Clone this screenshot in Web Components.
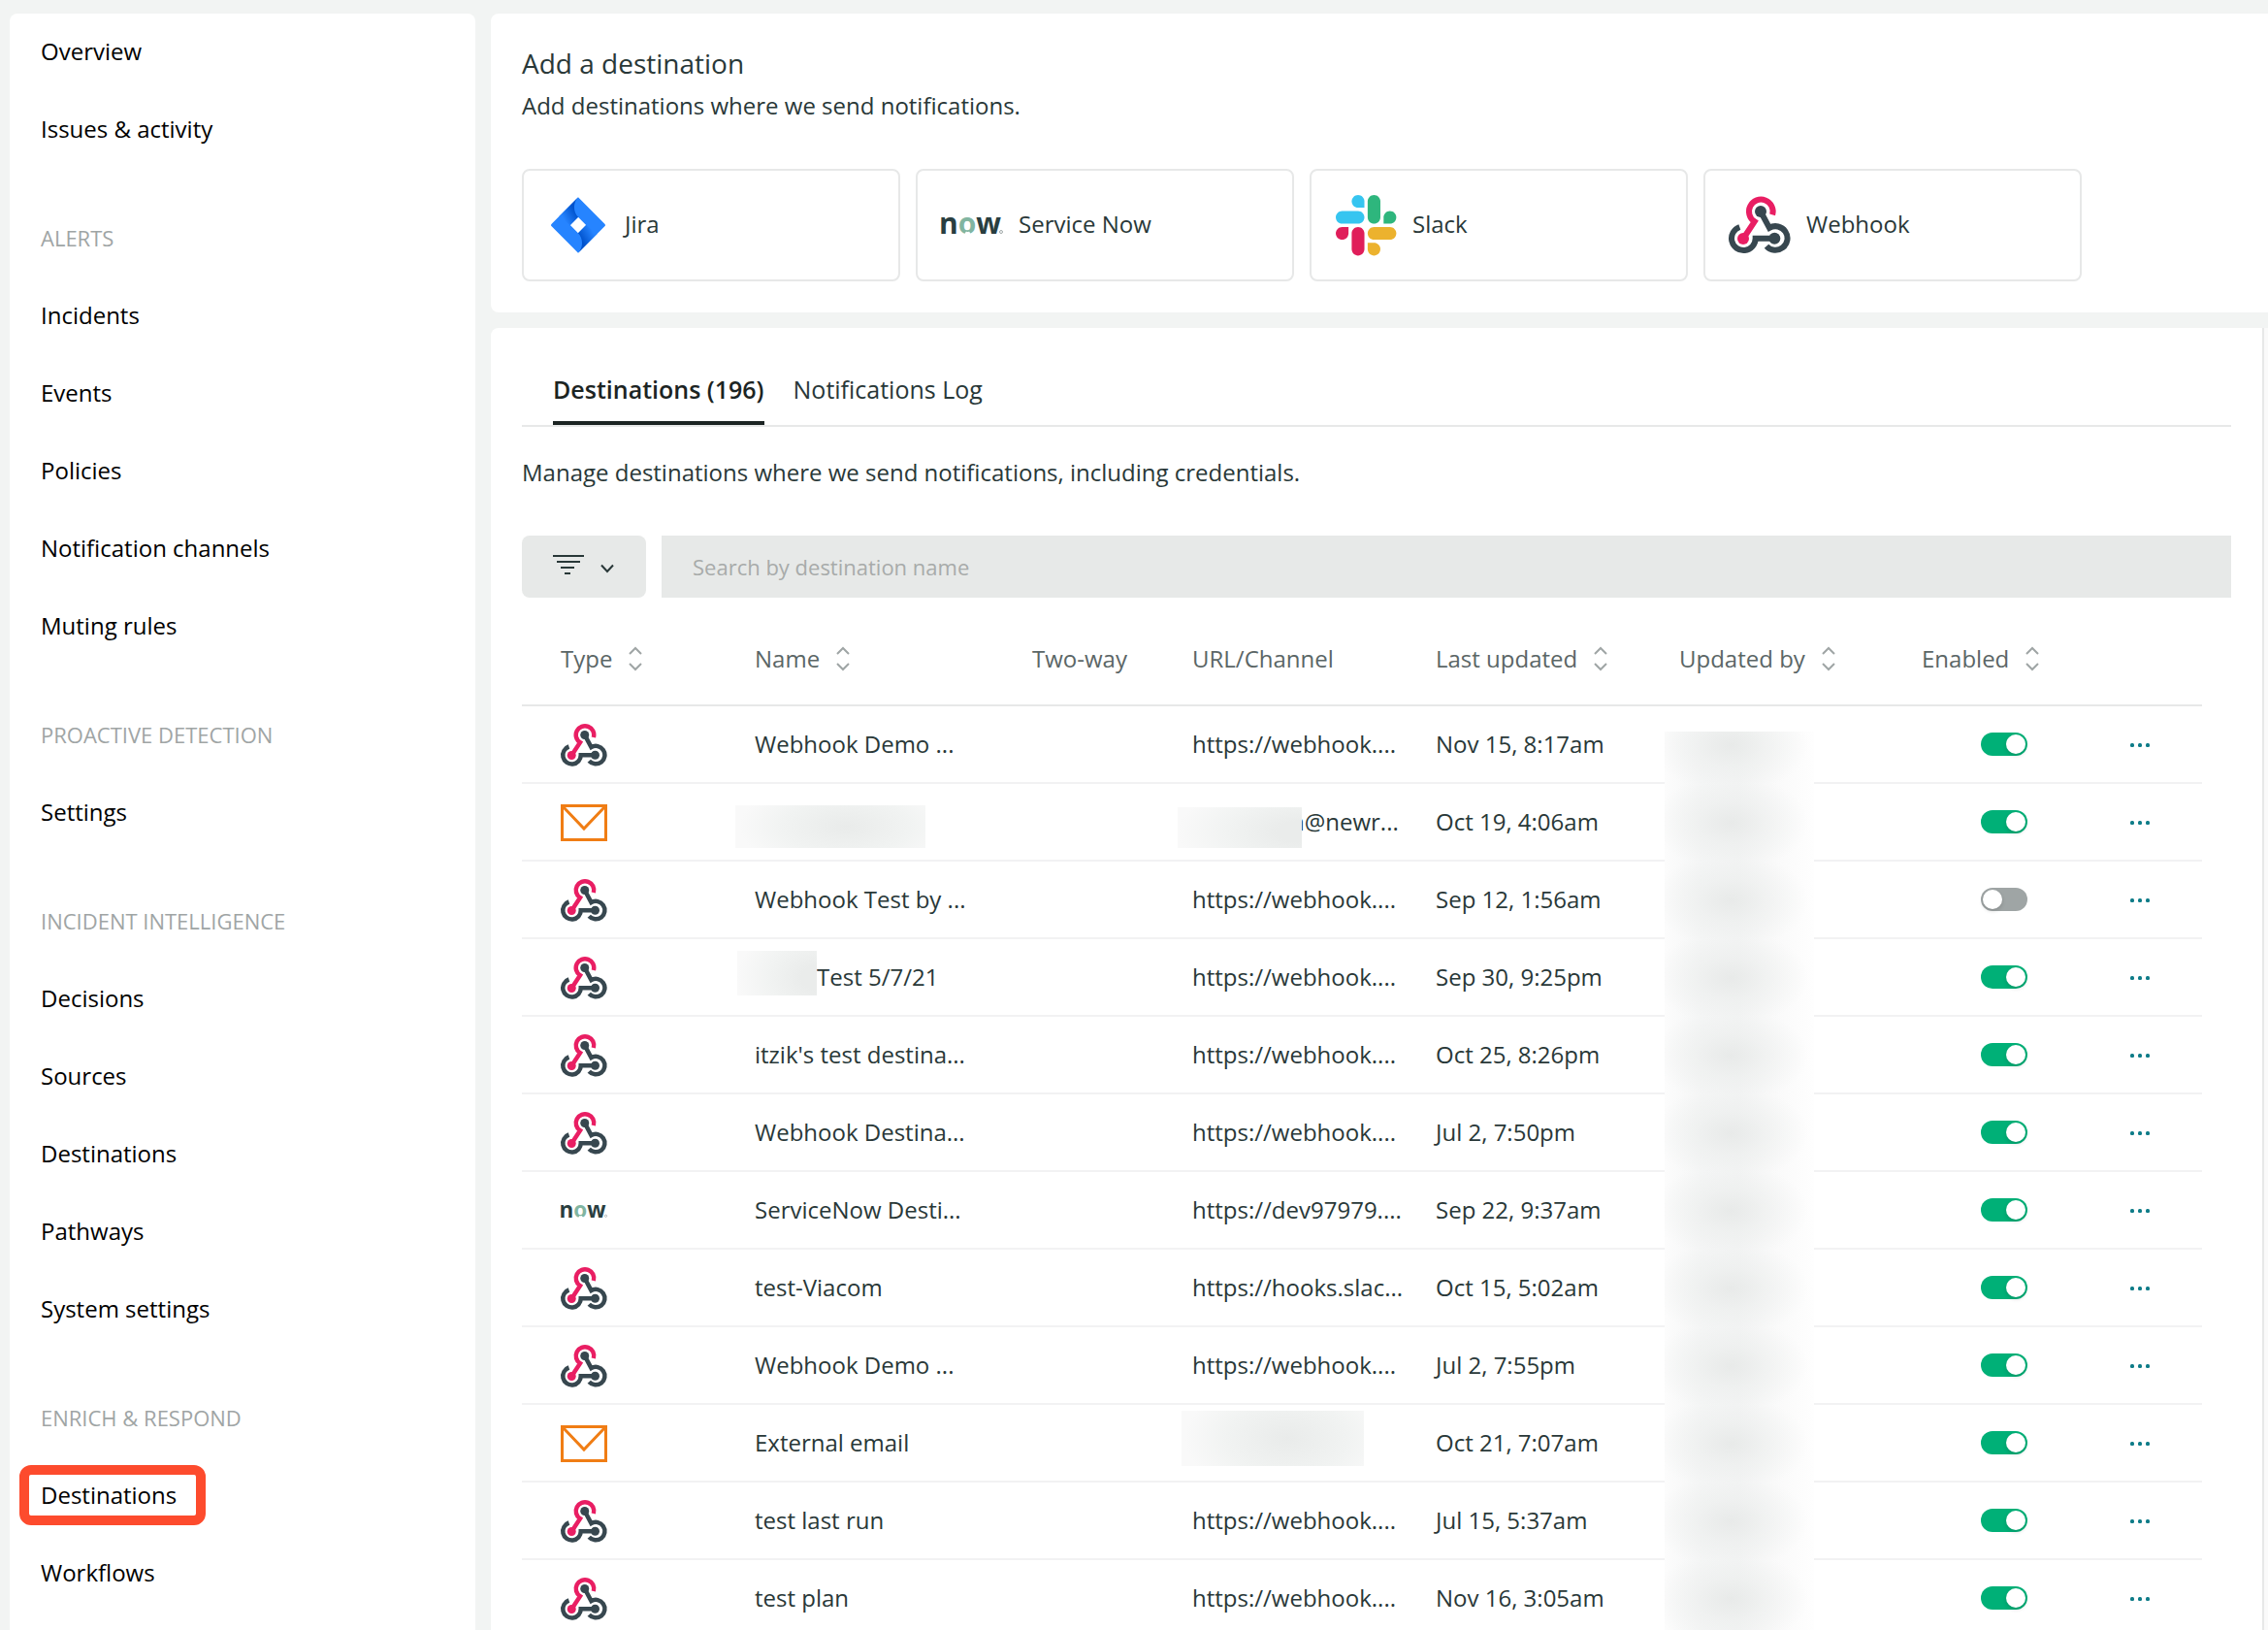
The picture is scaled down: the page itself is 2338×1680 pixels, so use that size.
<!DOCTYPE html>
<html lang="en">
<head>
<meta charset="utf-8">
<title>Destinations</title>
<style>
  html, body { margin: 0; height: 100%; }
  body {
    font-family: "Open Sans", "Noto Sans", sans-serif;
    font-size: 24px;
    line-height: 34px;
    color: #293838;
    background: #f2f4f3;
    --line: #e7e8e8;
    --line-soft: #f2f2f3;
    --field: #e7e9e8;
    --muted: #9fa5a5;
    overflow: hidden;
  }
</style>
</head>
<body>
<app-shell>
  <side-nav slot="nav">
    <nav-item>Overview</nav-item>
    <nav-item>Issues &amp; activity</nav-item>
    <nav-group heading="ALERTS">
      <nav-item>Incidents</nav-item>
      <nav-item>Events</nav-item>
      <nav-item>Policies</nav-item>
      <nav-item>Notification channels</nav-item>
      <nav-item>Muting rules</nav-item>
    </nav-group>
    <nav-group heading="PROACTIVE DETECTION">
      <nav-item>Settings</nav-item>
    </nav-group>
    <nav-group heading="INCIDENT INTELLIGENCE">
      <nav-item>Decisions</nav-item>
      <nav-item>Sources</nav-item>
      <nav-item>Destinations</nav-item>
      <nav-item>Pathways</nav-item>
      <nav-item>System settings</nav-item>
    </nav-group>
    <nav-group heading="ENRICH &amp; RESPOND">
      <nav-item marked>Destinations</nav-item>
      <nav-item>Workflows</nav-item>
    </nav-group>
  </side-nav>

  <add-destination>
    <destination-card icon="jira">Jira</destination-card>
    <destination-card icon="now">Service Now</destination-card>
    <destination-card icon="slack">Slack</destination-card>
    <destination-card icon="webhook">Webhook</destination-card>
  </add-destination>

  <destination-panel>
    <tab-bar slot="tabs">
      <tab-item selected>Destinations (196)</tab-item>
      <tab-item>Notifications Log</tab-item>
    </tab-bar>
    <search-bar></search-bar>
    <destination-table></destination-table>
  </destination-panel>
</app-shell>

<script>
const define = (name, html, setup) => {
  const template = document.createElement('template');
  template.innerHTML = html;
  customElements.define(name, class extends HTMLElement {
    constructor() {
      super();
      this.attachShadow({ mode: 'open' }).append(template.content.cloneNode(true));
    }
    connectedCallback() { if (setup) setup(this, this.shadowRoot); }
  });
};

const ICONS = {
  jira: `<svg viewBox="-12 -10 192 192">
    <defs>
      <linearGradient id="g1" gradientUnits="userSpaceOnUse" x1="76" y1="34" x2="34" y2="58"><stop offset=".1" stop-color="#0052cc"/><stop offset="1" stop-color="#2684ff"/></linearGradient>
      <linearGradient id="g2" gradientUnits="userSpaceOnUse" x1="92" y1="138" x2="134" y2="114"><stop offset=".1" stop-color="#0052cc"/><stop offset="1" stop-color="#2684ff"/></linearGradient>
    </defs>
    <path fill="#2684ff" fill-rule="evenodd" d="M84 0 166 82Q170 86 166 90L84 172 2 90Q-2 86 2 82ZM84 61.500 59.500 86 84 110.500 108.500 86Z"/>
    <path fill="url(#g1)" d="M84 0C68 16 68 45 84 61.500L59.500 86 25 59Z"/>
    <path fill="url(#g2)" d="M84 172C100 156 100 127 84 110.500L108.500 86 143 113Z"/>
  </svg>`,
  now: `<svg viewBox="0 0 64 64">
    <text x="-2" y="41" font-family="Open Sans, sans-serif" font-size="30" font-weight="700" fill="#293e40">n<tspan fill="#81b5a1">o</tspan>w</text>
    <path fill="#fff" d="M23 43 26 38.500Q27.500 39.500 29 38.500L32 43Z"/>
    <circle cx="62" cy="39" r="1.500" fill="none" stroke="#8b9596" stroke-width=".8"/>
  </svg>`,
  slack: `<svg viewBox="-2 -2 126 126">
    <g fill="#e01e5a"><path d="M25.800 77.600c0 7.100-5.800 12.900-12.900 12.900S0 84.700 0 77.600s5.800-12.900 12.900-12.900h12.900z"/><path d="M32.300 77.600c0-7.100 5.800-12.900 12.900-12.900s12.900 5.800 12.900 12.900v32.300c0 7.100-5.800 12.900-12.900 12.900s-12.900-5.800-12.900-12.900z"/></g>
    <g fill="#36c5f0"><path d="M45.200 25.800c-7.100 0-12.900-5.800-12.900-12.900S38.100 0 45.200 0s12.900 5.800 12.900 12.900v12.900z"/><path d="M45.200 32.300c7.100 0 12.900 5.800 12.900 12.900s-5.800 12.900-12.900 12.900H12.900C5.800 58.100 0 52.300 0 45.200s5.800-12.900 12.900-12.900z"/></g>
    <g fill="#2eb67d"><path d="M97 45.200c0-7.100 5.800-12.900 12.900-12.900s12.900 5.800 12.900 12.900-5.800 12.900-12.900 12.900H97z"/><path d="M90.500 45.200c0 7.100-5.800 12.900-12.900 12.900s-12.900-5.800-12.900-12.900V12.900C64.700 5.800 70.500 0 77.600 0s12.900 5.800 12.900 12.900z"/></g>
    <g fill="#ecb22e"><path d="M77.600 97c7.100 0 12.900 5.800 12.900 12.900s-5.800 12.900-12.900 12.900-12.900-5.800-12.900-12.900V97z"/><path d="M77.600 90.500c-7.100 0-12.900-5.800-12.900-12.900s5.800-12.900 12.900-12.900h32.300c7.100 0 12.900 5.800 12.900 12.900s-5.800 12.900-12.900 12.900z"/></g>
  </svg>`,
  webhook: `<svg viewBox="0 -9 192 192" fill="none" stroke-width="18">
    <g stroke="#37474f"><path d="M99 45 126 95.500A37 37 0 1 1 117 152"/><path d="M142 128H83A37 37 0 1 1 34 93"/></g>
    <path stroke="#e91e63" d="M135.500 55A37 37 0 1 0 80 76L45 129"/>
    <g stroke="none"><circle cx="99" cy="45" r="18" fill="#37474f"/><circle cx="142" cy="128" r="18" fill="#37474f"/><circle cx="45" cy="129" r="18" fill="#e91e63"/></g>
  </svg>`,
  email: `<svg viewBox="0 0 48 48" fill="none" stroke="#f07d14" stroke-width="3">
    <path d="M1.500 6.500H46.500V41.500H1.500Z"/><path d="M2.500 7.500 24 30 45.500 7.500"/>
  </svg>`
};

define('brand-icon', `<style>
  :host { display: block; flex: none; width: var(--icon-size, 48px); height: var(--icon-size, 48px); }
  svg { display: block; width: 100%; height: 100%; overflow: visible; }
</style><div aria-hidden="true"></div>`, (el, root) => {
  root.querySelector('div').innerHTML = ICONS[el.getAttribute('name')];
});

define('app-shell', `<style>
  :host { display: flex; gap: 16px; height: 100vh; box-sizing: border-box; padding: 14px 0 0 10px; overflow: hidden; }
  main { flex: 1; min-width: 0; display: flex; flex-direction: column; gap: 16px; }
</style><slot name="nav"></slot><main><slot></slot></main>`);

define('side-nav', `<style>
  :host { display: block; flex: none; width: 480px; box-sizing: border-box; background: #fff; border-radius: 8px 8px 0 0; padding: 23px 32px 0; }
  nav { display: flex; flex-direction: column; gap: 48px; }
</style><nav><slot></slot></nav>`);

define('nav-group', `<style>
  :host { display: flex; flex-direction: column; gap: 48px; margin-top: 32px; }
  h2 { margin: 0; font-size: 22px; line-height: 32px; font-weight: 400; color: var(--muted); }
</style><h2></h2><slot></slot>`, (el, root) => {
  root.querySelector('h2').textContent = el.getAttribute('heading');
});

define('nav-item', `<style>
  :host { display: block; line-height: 32px; }
  a { display: inline-block; position: relative; color: #000; text-decoration: none; vertical-align: top; }
  :host([marked]) a::after { content: ""; position: absolute; inset: -15px -30px -15px -22px; border: 10px solid #fd4b2d; border-radius: 12px; }
</style><a href="#"><slot></slot></a>`);

define('add-destination', `<style>
  :host { display: block; flex: none; background: #fff; border-radius: 8px 0 0 8px; padding: 32px; }
  h1 { margin: 0 0 8px; font-size: 28px; line-height: 38px; font-weight: 400; }
  p { margin: 0 0 48px; }
  .cards { display: flex; flex-wrap: wrap; gap: 16px; }
</style><h1>Add a destination</h1><p>Add destinations where we send notifications.</p><div class="cards"><slot></slot></div>`);

define('destination-card', `<style>
  :host { display: block; flex: 0 0 390px; }
  button { display: flex; align-items: center; gap: 16px; box-sizing: border-box; width: 100%; height: 116px; padding: 0 24px; border: 2px solid var(--line); border-radius: 8px; background: #fff; font: inherit; color: inherit; text-align: left; }
  span { padding-bottom: 2px; }
  brand-icon { --icon-size: 64px; }
</style><button type="button"><brand-icon></brand-icon><span><slot></slot></span></button>`, (el, root) => {
  const icon = document.createElement('brand-icon');
  icon.setAttribute('name', el.getAttribute('icon'));
  root.querySelector('brand-icon').replaceWith(icon);
});

define('destination-panel', `<style>
  :host { display: flex; flex: 1; min-height: 0; background: #fff; border-radius: 8px 0 0 0; overflow: hidden; }
  section { flex: 1; min-width: 0; padding: 32px 32px 0; }
  p { margin: 30px 0 48px; }
  .track { flex: none; width: 4px; border-left: 2px solid var(--line); background: #fafafa; }
</style><section><slot name="tabs"></slot><p>Manage destinations where we send notifications, including credentials.</p><slot></slot></section><div class="track"></div>`);

define('tab-bar', `<style>
  :host { display: flex; gap: 30px; padding: 0 32px; border-bottom: 2px solid var(--line); font-size: 25px; }
</style><slot></slot>`);

define('tab-item', `<style>
  :host { display: block; }
  button { display: block; margin: 0; padding: 14px 0 16px; border: 0; border-bottom: 4px solid transparent; background: none; font: inherit; color: inherit; }
  :host([selected]) button { font-weight: 600; color: #1c2423; border-color: #1c2423; }
</style><button type="button"><slot></slot></button>`);

define('search-bar', `<style>
  :host { display: flex; gap: 16px; margin-bottom: 16px; }
  button { display: flex; align-items: center; justify-content: center; flex: none; width: 128px; height: 64px; padding: 0; border: 0; border-radius: 8px; background: var(--field); }
  input { flex: 1; min-width: 0; box-sizing: border-box; height: 64px; padding: 0 32px; border: 0; border-radius: 0; background: var(--field); font: inherit; font-size: 22px; color: inherit; }
  input::placeholder { color: #a8abaa; opacity: 1; }
  svg { display: block; }
</style>
<button type="button" aria-label="Filter"><svg width="64" height="32" viewBox="0 0 64 32" fill="none" stroke="#293838" stroke-width="2"><path d="M0 5H32M4 11H28M8 17H22M12 23H18"/><path d="M50 14.500 56 21 62 14.500"/></svg></button>
<input type="text" aria-label="Search by destination name" placeholder="Search by destination name">`);

define('sort-button', `<style>
  :host { display: inline-block; }
  button { display: flex; align-items: center; gap: 16px; padding: 0; border: 0; background: none; font: inherit; color: inherit; white-space: nowrap; }
  svg { flex: none; }
</style><button type="button"><slot></slot><svg width="16" height="26" viewBox="0 0 16 26" fill="none" stroke="#9fa5a5" stroke-width="2"><path d="M2 8 8 2 14 8M2 18 8 24 14 18"/></svg></button>`);

define('toggle-switch', `<style>
  :host { display: block; }
  input { appearance: none; display: block; width: 48px; height: 24px; margin: 0; padding: 2px; box-sizing: border-box; border-radius: 12px; background: #9fa5a5; }
  input::before { content: ""; display: block; width: 20px; height: 20px; border-radius: 10px; background: #fff; box-shadow: 0 2px 4px rgba(0, 0, 0, .15); }
  input:checked { background: #00b077; }
  input:checked::before { margin-left: auto; }
</style><input type="checkbox" role="switch" aria-label="Enabled">`, (el, root) => {
  root.querySelector('input').checked = el.hasAttribute('on');
});

define('row-menu', `<style>
  :host { display: block; }
  button { display: block; padding: 8px 16px; border: 0; background: none; }
  svg { display: block; }
</style><button type="button" aria-label="More actions"><svg width="20" height="4" viewBox="0 0 20 4" fill="#0e7c88"><rect width="4" height="4" rx="1.500"/><rect x="8" width="4" height="4" rx="1.500"/><rect x="16" width="4" height="4" rx="1.500"/></svg></button>`);

/* A patch laid over private data in a cell. */
define('privacy-patch', `<style>
  :host { position: absolute; background: radial-gradient(ellipse 56% 110% at 58% 50%, #e9ebea 0%, #f1f3f2 60%, #f9f9f9 100%); }
  :host([cut]) { background: radial-gradient(ellipse 100% 130% at 100% 60%, #eaeceb 20%, #f1f3f2 60%, #f9f9f9 100%); }
</style>`);

const patch = (x, y, w, h, cut) => `<privacy-patch ${cut ? 'cut' : ''} style="left:${x}px;top:${y}px;width:${w}px;height:${h}px"></privacy-patch>`;
const HOOK = 'https://webhook....';
const ROWS = [
  ['webhook', 'Webhook Demo ...', HOOK, 'Nov 15, 8:17am', 1],
  ['email', patch(-20, 22, 196, 44), `<span class="mail">n@newr...</span>` + patch(-15, 24, 128, 42, 1), 'Oct 19, 4:06am', 1],
  ['webhook', 'Webhook Test by ...', HOOK, 'Sep 12, 1:56am', 0],
  ['webhook', `<span class="rest">Test 5/7/21</span>` + patch(-18, 12, 82, 46, 1), HOOK, 'Sep 30, 9:25pm', 1],
  ['webhook', "itzik's test destina...", HOOK, 'Oct 25, 8:26pm', 1],
  ['webhook', 'Webhook Destina...', HOOK, 'Jul 2, 7:50pm', 1],
  ['now', 'ServiceNow Desti...', 'https://dev97979....', 'Sep 22, 9:37am', 1],
  ['webhook', 'test-Viacom', 'https://hooks.slac...', 'Oct 15, 5:02am', 1],
  ['webhook', 'Webhook Demo ...', HOOK, 'Jul 2, 7:55pm', 1],
  ['email', 'External email', patch(-11, 6, 188, 57), 'Oct 21, 7:07am', 1],
  ['webhook', 'test last run', HOOK, 'Jul 15, 5:37am', 1],
  ['webhook', 'test plan', HOOK, 'Nov 16, 3:05am', 1]
];

define('destination-table', `<style>
  :host { display: block; padding-right: 30px; }
  table { width: 100%; table-layout: fixed; border-collapse: separate; border-spacing: 0; }
  th, td { box-sizing: border-box; padding: 0; text-align: left; vertical-align: middle; font-weight: 400; white-space: nowrap; position: relative; }
  th { height: 96px; border-bottom: 2px solid var(--line); color: #5b6666; }
  td { height: 80px; border-bottom: 2px solid var(--line-soft); }
  tr > :first-child { padding-left: 40px; }
  td.icon { padding-top: 2px; }
  toggle-switch { margin-left: 61px; }
  .mail { margin-left: 101px; }
  .rest { margin-left: 64px; }
  td.by::after {
    content: ""; position: absolute; left: -15px; top: 0; width: 154px; height: 80px;
    background:
      radial-gradient(ellipse 52% 62% at 44% 50%, rgba(231, 233, 232, .9), rgba(236, 238, 237, .6) 45%, rgba(246, 247, 247, 0)),
      linear-gradient(90deg, #fcfcfc, #f5f6f6 25%, #f3f4f4 50%, #fafafa 75%, #fefefe);
  }
  tr:first-child td.by::after { top: 26px; height: 54px; background-size: 154px 80px; background-position: 0 100%; }
</style>
<table>
  <colgroup><col style="width:240px"><col style="width:286px"><col style="width:165px"><col style="width:251px"><col style="width:251px"><col style="width:250px"><col style="width:199px"><col style="width:90px"></colgroup>
  <thead><tr>
    <th><sort-button>Type</sort-button></th><th><sort-button>Name</sort-button></th><th>Two-way</th><th>URL/Channel</th>
    <th><sort-button>Last updated</sort-button></th><th><sort-button>Updated by</sort-button></th><th><sort-button>Enabled</sort-button></th><th></th>
  </tr></thead>
  <tbody></tbody>
</table>`, (el, root) => {
  root.querySelector('tbody').innerHTML = ROWS.map(([icon, name, url, date, on]) => `<tr>
    <td class="icon"><brand-icon name="${icon}"></brand-icon></td><td>${name}</td><td></td><td>${url}</td><td>${date}</td>
    <td class="by"></td><td><toggle-switch ${on ? 'on' : ''}></toggle-switch></td><td class="icon"><row-menu></row-menu></td></tr>`).join('');
});
</script>
</body>
</html>
